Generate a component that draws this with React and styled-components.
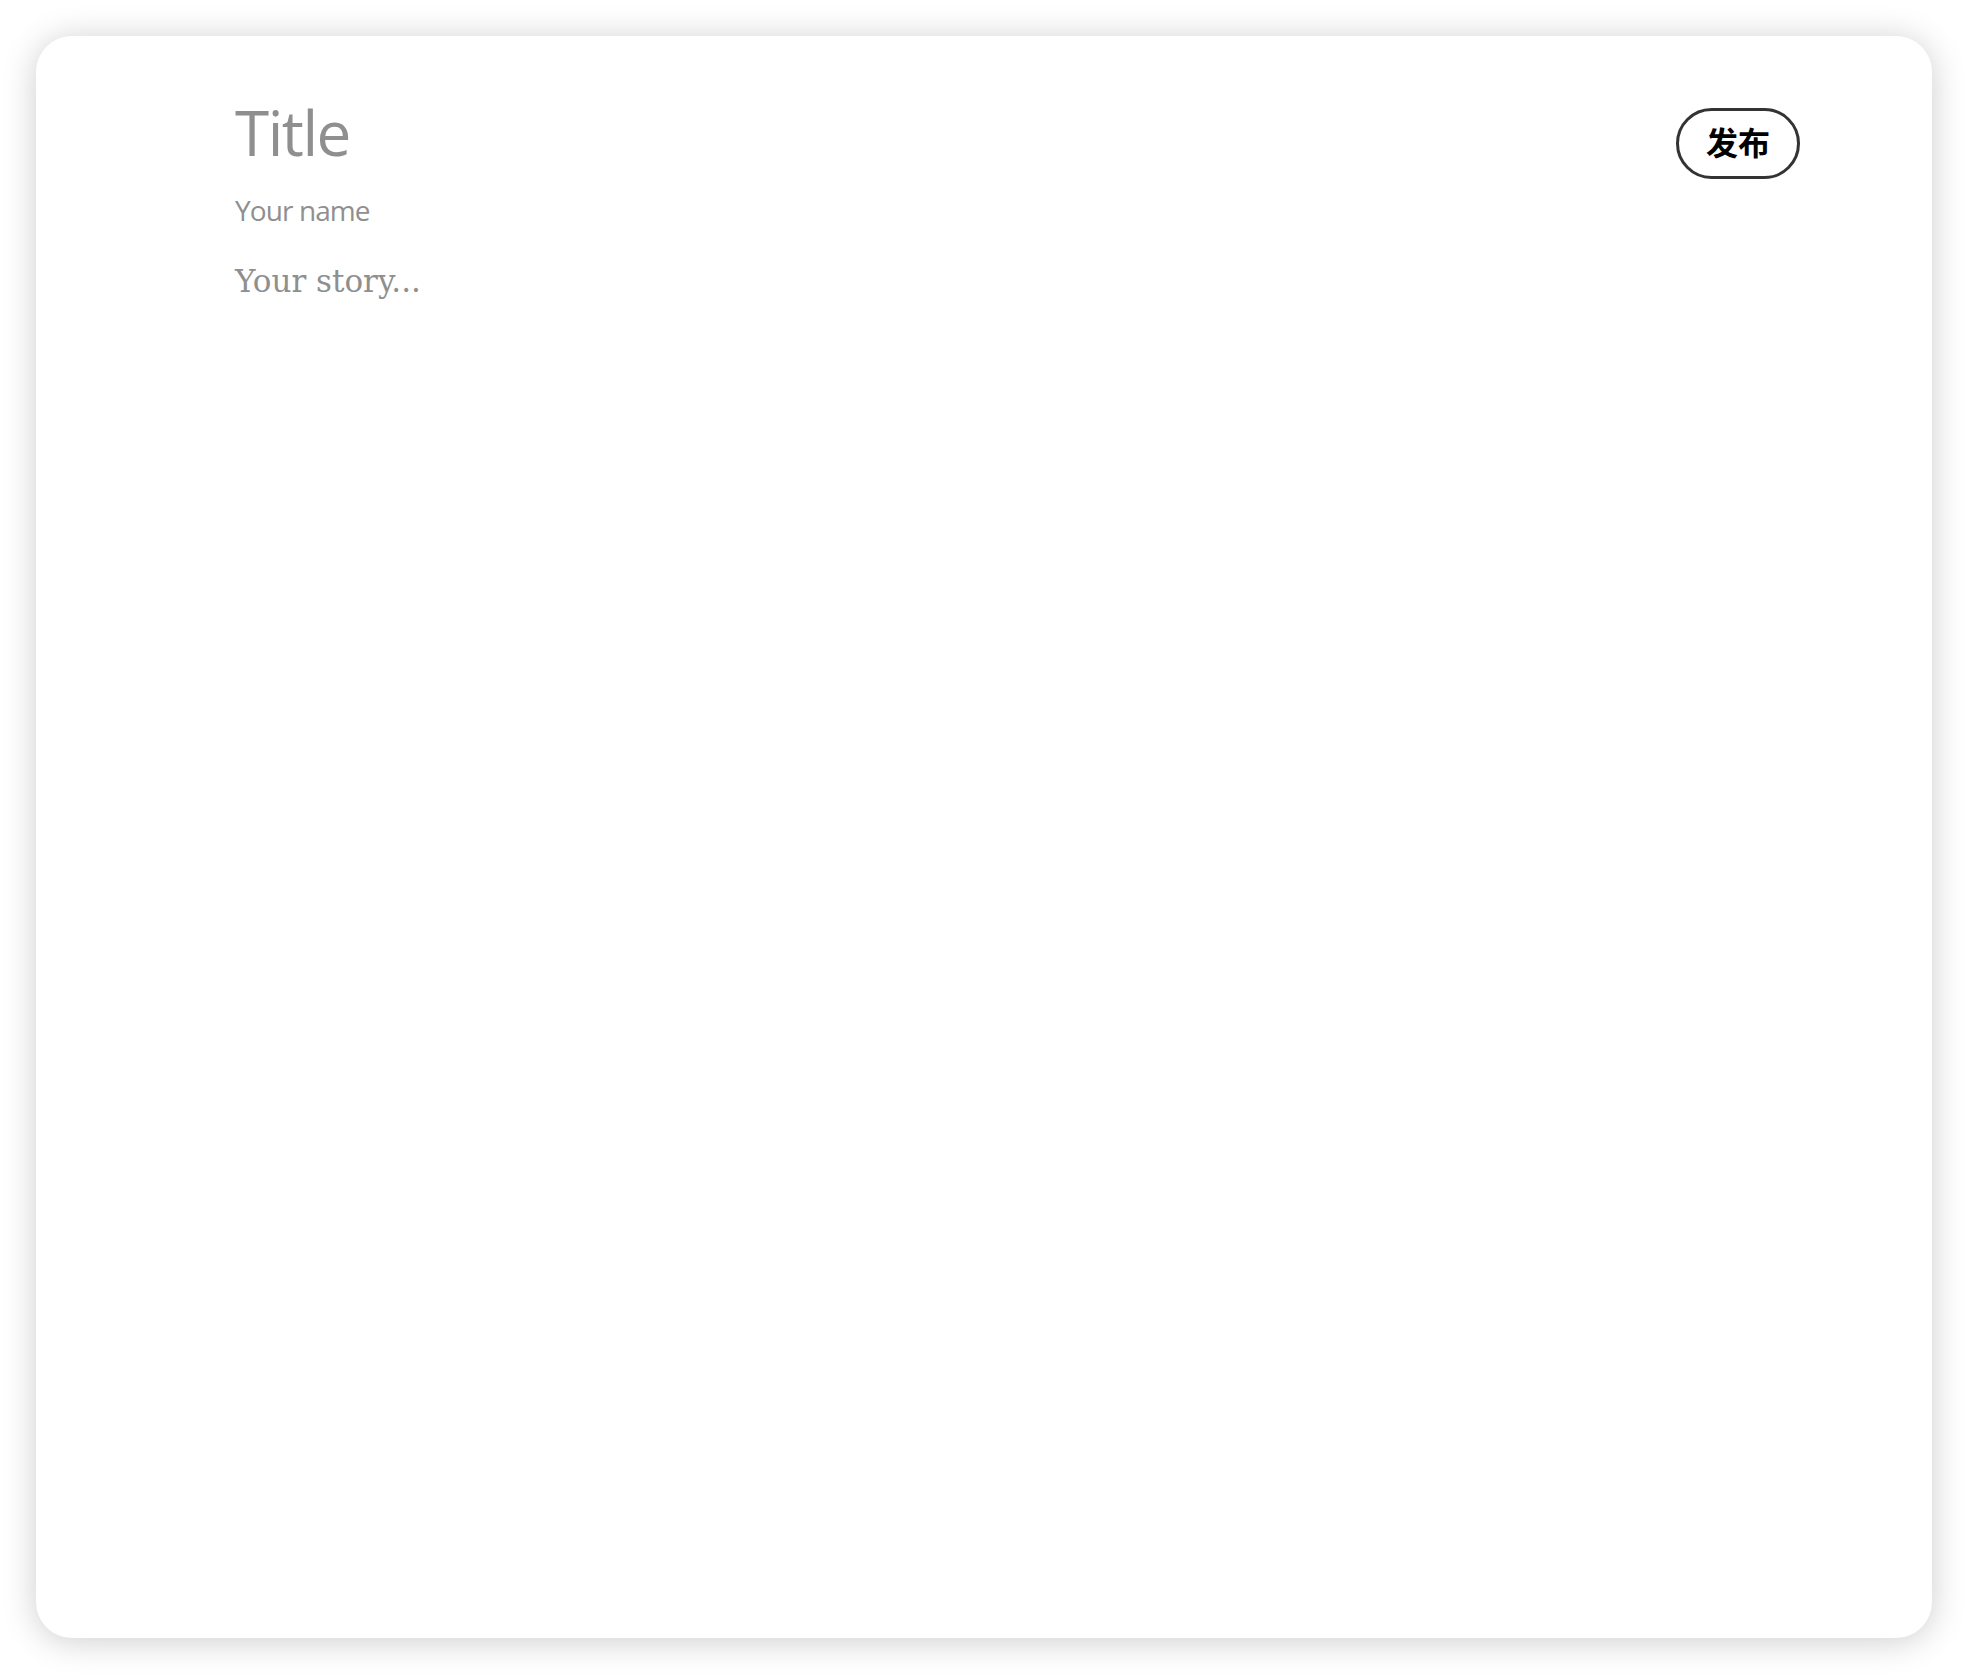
import React from "react";
import styled, { createGlobalStyle } from "styled-components";

const GlobalStyle = createGlobalStyle`
  html, body {
    margin: 0;
    padding: 0;
    background: #ffffff;
  }
  * { box-sizing: border-box; }
`;

const Page = styled.div`
  padding: 36px;
  min-height: 100vh;
`;

const Card = styled.main`
  height: calc(100vh - 72px);
  background: #ffffff;
  border-radius: 36px;
  box-shadow: 0 3px 34px rgba(0, 0, 0, 0.2);
  padding: 58px 132px 0 199px;
  display: flex;
  align-items: flex-start;
  justify-content: space-between;
`;

const Editor = styled.div`
  display: flex;
  flex-direction: column;
`;

const Field = styled.div`
  color: #8f8f8f;
  font-family: ${(p) => (p.$serif ? '"DejaVu Serif", serif' : '"Open Sans", "Noto Sans", sans-serif')};
  font-size: ${(p) => p.$size}px;
  line-height: ${(p) => p.$lh}px;
  margin-top: ${(p) => p.$mt || 0}px;
  letter-spacing: ${(p) => p.$ls || 0}px;
  white-space: nowrap;
`;

const PublishButton = styled.button`
  margin-top: 14px;
  width: 124px;
  height: 71px;
  border: 3px solid #333333;
  border-radius: 36px;
  background: #ffffff;
  color: #000000;
  font-family: "Noto Sans CJK SC", sans-serif;
  font-weight: 700;
  font-size: 32px;
  line-height: 1;
  padding: 0 0 5px 0;
  display: flex;
  align-items: center;
  justify-content: center;
  cursor: pointer;
`;

export default function App() {
  return (
    <>
      <GlobalStyle />
      <Page>
        <Card>
          <Editor>
            <Field $size={62} $lh={77} $ls={-1.5}>Title</Field>
            <Field $size={28} $lh={38} $mt={20} $ls={-0.9}>Your name</Field>
            <Field $serif $size={31} $lh={44} $mt={30}>Your story...</Field>
          </Editor>
          <PublishButton>发布</PublishButton>
        </Card>
      </Page>
    </>
  );
}
